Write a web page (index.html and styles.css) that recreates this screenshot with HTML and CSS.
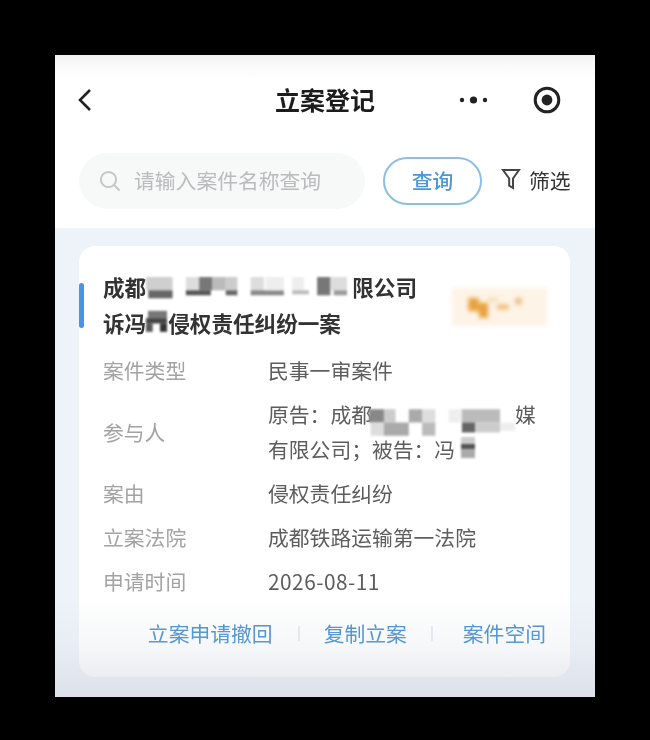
FILE: index.html
```html
<!DOCTYPE html>
<html lang="zh-CN">
<head>
<meta charset="utf-8">
<title>立案登记</title>
<link rel="stylesheet" href="styles.css">
</head>
<body>
<main class="phone">
  <header class="nav">
    <svg class="back" viewBox="0 0 16 24" width="16" height="24"><path d="M13 2 3 12l10 10" /></svg>
    <h1 class="nav-title">立案登记</h1>
    <div class="capsule">
      <svg class="dots" viewBox="0 0 30 8" width="30" height="8"><circle cx="3" cy="4" r="2.2"/><circle cx="14.5" cy="4" r="3.6"/><circle cx="26" cy="4" r="2.2"/></svg>
      <svg class="target" viewBox="0 0 28 28" width="28" height="28"><circle class="ring" cx="14" cy="14" r="11.8"/><circle cx="14" cy="14" r="5.4"/></svg>
    </div>
  </header>
  <section class="search-row">
    <div class="search-box">
      <svg class="search-icon" viewBox="0 0 22 22" width="22" height="22"><circle cx="9.5" cy="9.5" r="7.6"/><path d="m15 15 5.5 5.5"/></svg>
      <span class="placeholder">请输入案件名称查询</span>
    </div>
    <button class="search-btn"><span class="btn-label">查询</span></button>
    <div class="filter">
      <svg class="filter-icon" viewBox="0 0 20 22" width="20" height="22"><path d="M2 2h16l-6 8.5V20l-3.8-2.4V10.500Z"/></svg>
      <span class="filter-label">筛选</span>
    </div>
  </section>
  <section class="content">
    <article class="card">
      <span class="marker"></span>
      <div class="card-head">
        <h2 class="case-title">
          <span class="line">成都<svg class="mosaic m-title" viewBox="225 105 620 70" width="206" height="24">
            <rect x="225" y="110" width="80" height="40" fill="#cfcfcf"/><rect x="232" y="150" width="73" height="24" fill="#666"/>
            <rect x="345" y="110" width="40" height="40" fill="#ddd"/><rect x="385" y="110" width="40" height="40" fill="#777"/><rect x="345" y="150" width="75" height="15" fill="#555"/>
            <rect x="425" y="110" width="40" height="40" fill="#bbb"/><rect x="465" y="110" width="35" height="40" fill="#ccc"/><rect x="465" y="150" width="35" height="15" fill="#666"/>
            <rect x="540" y="110" width="40" height="40" fill="#ddd"/><rect x="540" y="150" width="100" height="15" fill="#888"/><rect x="585" y="110" width="55" height="40" fill="#eee"/>
            <rect x="665" y="110" width="35" height="40" fill="#eee"/><rect x="665" y="150" width="50" height="12" fill="#bbb"/>
            <rect x="740" y="110" width="40" height="55" fill="#777"/><rect x="780" y="110" width="50" height="40" fill="#ddd"/><rect x="790" y="150" width="40" height="15" fill="#999"/>
          </svg>限公司</span>
          <span class="line">诉冯<svg class="mosaic m-name" viewBox="232 210 63 65" width="21" height="22">
            <rect x="238" y="212" width="57" height="22" fill="#777"/><rect x="232" y="234" width="63" height="16" fill="#444"/><rect x="232" y="250" width="20" height="25" fill="#555"/><rect x="274" y="250" width="21" height="25" fill="#333"/>
          </svg>侵权责任纠纷一案</span>
        </h2>
        <svg class="badge" viewBox="1145 145 285 115" width="95" height="38">
          <rect x="1193" y="175" width="32" height="40" fill="#e8a33e"/><rect x="1225" y="190" width="28" height="45" fill="#e8a33e"/><rect x="1253" y="175" width="27" height="10" fill="#f5d5a5"/><rect x="1280" y="195" width="35" height="15" fill="#eebb77"/><rect x="1335" y="175" width="20" height="20" fill="#eebb88"/>
        </svg>
      </div>
      <dl class="fields">
        <div class="field"><dt>案件类型</dt><dd>民事一审案件</dd></div>
        <div class="field"><dt>参与人</dt><dd>
          原告：成都<svg class="mosaic m-party" viewBox="895 145 440 80" width="146" height="27">
            <rect x="895" y="145" width="45" height="40" fill="#888"/><rect x="940" y="145" width="35" height="40" fill="#ccc"/><rect x="900" y="185" width="40" height="40" fill="#ddd"/><rect x="940" y="185" width="75" height="40" fill="#aaa"/>
            <rect x="1015" y="145" width="40" height="40" fill="#aaa"/><rect x="1055" y="145" width="40" height="40" fill="#ddd"/><rect x="1055" y="185" width="40" height="40" fill="#bbb"/>
            <rect x="1135" y="145" width="40" height="40" fill="#eee"/><rect x="1175" y="145" width="115" height="40" fill="#bbb"/><rect x="1175" y="185" width="40" height="30" fill="#666"/><rect x="1215" y="185" width="75" height="30" fill="#ccc"/><rect x="1290" y="185" width="45" height="25" fill="#eee"/>
          </svg>媒<br>
          有限公司；被告：冯<svg class="mosaic m-tail" viewBox="0 0 40 60" width="14" height="21"><rect width="40" height="20" fill="#ccc"/><rect y="20" width="40" height="15" fill="#555"/><rect y="35" width="40" height="25" fill="#aaa"/></svg>
        </dd></div>
        <div class="field"><dt>案由</dt><dd>侵权责任纠纷</dd></div>
        <div class="field"><dt>立案法院</dt><dd>成都铁路运输第一法院</dd></div>
        <div class="field"><dt>申请时间</dt><dd class="date">2026-08-11</dd></div>
      </dl>
      <nav class="actions">
        <a>立案申请撤回</a><span class="sep sep-a"></span><a>复制立案</a><span class="sep sep-b"></span><a>案件空间</a>
      </nav>
    </article>
  </section>
  <div class="fade"></div>
</main>
</body>
</html>
```
FILE: styles.css
```css
* { box-sizing: border-box; }
html, body { margin: 0; height: 100%; }
body {
  background: #000;
  padding: 55px;
  font-family: "Noto Sans CJK SC", "Noto Sans", sans-serif;
  overflow: hidden;
}
.phone {
  position: relative;
  width: 540px;
  height: 642px;
  display: flex;
  flex-direction: column;
  background: #fff;
  filter: blur(0.5px);
  overflow: hidden;
}
.nav {
  height: 90px;
  padding: 0 34px 0 24px;
  display: grid;
  grid-template-columns: 1fr auto 1fr;
  align-items: center;
  background: linear-gradient(#f1f1f1 0, #fafafa 10px, #fff 26px);
}
.back { fill: none; stroke: #222; stroke-width: 2.6; justify-self: start; margin-left: -2px; }
.nav-title { margin: 0 0 3px 10px; font-size: 25px; font-weight: 700; color: #1c1c1c; line-height: 34px; }
.capsule { justify-self: end; display: flex; align-items: center; gap: 44px; }
.dots { fill: #222; }
.target { fill: #222; }
.target .ring { fill: none; stroke: #222; stroke-width: 3; }
.search-row {
  height: 83px;
  padding: 8px 0 19px 24px;
  display: flex;
  align-items: center;
}
.search-box {
  width: 286px;
  height: 56px;
  border-radius: 28px;
  background: #f7f8f8;
  display: flex;
  align-items: center;
  padding-left: 20px;
  gap: 13px;
}
.search-icon { fill: none; stroke: #c4c6c8; stroke-width: 2; flex: none; }
.placeholder { font-size: 20.8px; color: #b9bbbd; line-height: 30px; white-space: nowrap; transform: translateY(-1px); }
.search-btn {
  margin-left: 18px;
  width: 99px;
  height: 48px;
  border-radius: 24px;
  border: 2px solid #8dbfdf;
  background: #fff;
  color: #4b97d6;
  font: 500 20.8px/30px "Noto Sans CJK SC", sans-serif;
  padding: 0;
}
.btn-label { display: block; transform: translateY(-1px); }
.filter { margin-left: 19px; display: flex; align-items: center; gap: 8px; font-size: 20.8px; color: #333; line-height: 30px; }
.filter-label { transform: translateY(-1px); }
.filter-icon { fill: none; stroke: #444; stroke-width: 2; margin-top: -5px; }
.content { flex: 1; background: #eef2f9; padding: 18px 25px 0 24px; }
.card {
  position: relative;
  width: 491px;
  height: 431px;
  border-radius: 16px;
  background: #fff;
  padding: 23px 23px 26px 24px;
}
.marker {
  position: absolute;
  left: 0;
  top: 37px;
  width: 5px;
  height: 45px;
  border-radius: 3px;
  background: #4a94e6;
}
.card-head { display: flex; justify-content: space-between; align-items: center; height: 72px; }
.case-title { margin: 0; font-size: 21.6px; font-weight: 700; color: #333; line-height: 36px; }
.line { display: block; white-space: nowrap; height: 36px; }
.mosaic { display: inline-block; filter: blur(0.8px); }
.m-title { vertical-align: -5px; transform: translateY(-2px); }
.m-name { vertical-align: -4px; margin-right: 1px; transform: translateY(-4px); }
.m-party { vertical-align: -9px; margin-left: -3px; margin-right: 0; transform: translateY(4px); }
.m-tail { vertical-align: -4px; margin-left: 6px; transform: translateY(-4px); }
.badge { background: #fdf3e6; flex: none; margin-top: 4px; filter: blur(2px); }
.fields { margin: 12px 0 0; display: flex; flex-direction: column; gap: 10px; }
.field { display: flex; align-items: center; font-size: 20.8px; line-height: 34px; }
.field dt { width: 165px; color: #a3a3a3; flex: none; }
.field dd { margin: 0; color: #5d5d5d; white-space: nowrap; }
.field .date { letter-spacing: .5px; }
.actions {
  margin-top: 18px;
  display: flex;
  justify-content: flex-end;
  align-items: center;
  font-size: 20.8px;
  line-height: 34px;
  color: #3f8dd2;
  padding-right: 1px;
}
.sep { width: 2px; height: 15px; background: #e8ecf1; }
.sep-a { margin: 0 24px 0 25px; }
.sep-b { margin: 0 30px 0 24px; }
.fade {
  position: absolute;
  left: 0;
  right: 0;
  bottom: 0;
  height: 100px;
  pointer-events: none;
  background: linear-gradient(rgba(210,215,225,0), rgba(210,215,225,.2) 50%, rgba(210,215,225,.62));
}
```
